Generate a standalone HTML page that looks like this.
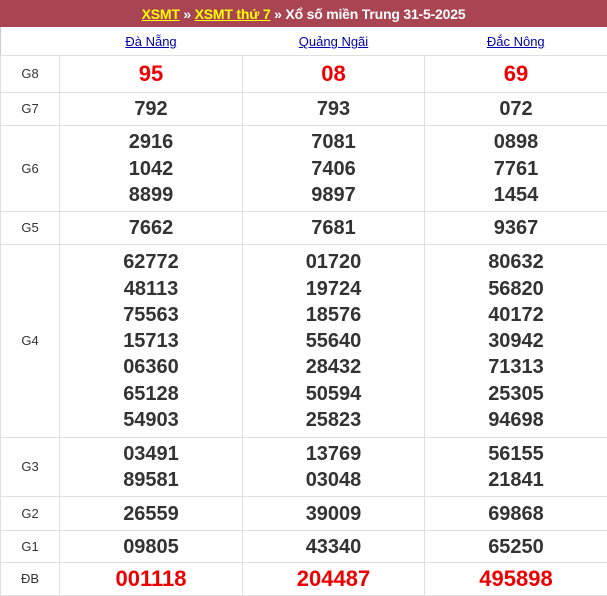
<!DOCTYPE html>
<html><head><meta charset="utf-8"><style>
*{margin:0;padding:0;box-sizing:border-box}
body{width:607px;height:595px;background:#fff;font-family:"Liberation Sans",Arial,sans-serif;overflow:hidden}
.hd{height:27px;background:#a94452;color:#fff;text-align:center;font-weight:bold;font-size:14px;letter-spacing:-0.2px;line-height:27px;border:1px solid #a94452}
.hd a{color:#ff0;text-decoration:underline}
table{width:607px;border-collapse:collapse;table-layout:fixed;border-left:1px solid #ccc;border-right:1px solid #ccc;border-bottom:1px solid #ccc}
td{border:1px solid #e0e0e0;text-align:center;vertical-align:middle;color:#333;font-weight:bold;font-size:20px;line-height:26.3px}
td.l{font-weight:normal;font-size:13px;color:#333}
tr.h td{border-left:none;border-right:none;border-top:none}
tr.h a{color:#00a;font-size:13px;text-decoration:underline;font-weight:normal}
.r{color:#e00;font-size:22px}
</style></head><body>
<div class="hd"><a>XSMT</a> » <a>XSMT thứ 7</a> » Xổ số miền Trung 31-5-2025</div>
<table>
<colgroup><col style="width:59px"><col style="width:183px"><col style="width:182px"><col style="width:183px"></colgroup>
<tr class="h" style="height:28px"><td></td><td><a>Đà Nẵng</a></td><td><a>Quảng Ngãi</a></td><td><a>Đắc Nông</a></td></tr>
<tr style="height:37px"><td class="l">G8</td><td class="r">95</td><td class="r">08</td><td class="r">69</td></tr>
<tr style="height:33px"><td class="l">G7</td><td>792</td><td>793</td><td>072</td></tr>
<tr style="height:86px"><td class="l">G6</td><td>2916<br>1042<br>8899</td><td>7081<br>7406<br>9897</td><td>0898<br>7761<br>1454</td></tr>
<tr style="height:33px"><td class="l">G5</td><td>7662</td><td>7681</td><td>9367</td></tr>
<tr style="height:193px"><td class="l">G4</td><td>62772<br>48113<br>75563<br>15713<br>06360<br>65128<br>54903</td><td>01720<br>19724<br>18576<br>55640<br>28432<br>50594<br>25823</td><td>80632<br>56820<br>40172<br>30942<br>71313<br>25305<br>94698</td></tr>
<tr style="height:59px"><td class="l">G3</td><td>03491<br>89581</td><td>13769<br>03048</td><td>56155<br>21841</td></tr>
<tr style="height:34px"><td class="l">G2</td><td>26559</td><td>39009</td><td>69868</td></tr>
<tr style="height:32px"><td class="l">G1</td><td>09805</td><td>43340</td><td>65250</td></tr>
<tr style="height:33px"><td class="l">ĐB</td><td class="r">001118</td><td class="r">204487</td><td class="r">495898</td></tr>
</table>
</body></html>
